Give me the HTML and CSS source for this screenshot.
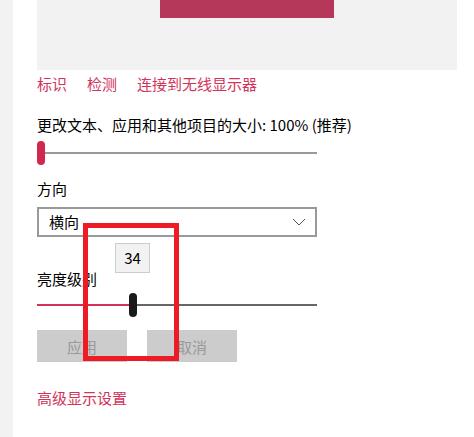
FILE: index.html
```html
<!DOCTYPE html>
<html lang="zh-CN">
<head>
    <meta charset="UTF-8">
    <meta name="viewport" content="width=device-width, initial-scale=1.0">
    <title>显示设置</title>
    <link rel="stylesheet" href="styles.css">
</head>
<body>
    <div class="side"></div>
    <div class="main">
        <div class="preview">
            <div class="monitor"></div>
        </div>
        <div class="links">
            <a href="#">标识</a>
            <a href="#">检测</a>
            <a href="#">连接到无线显示器</a>
        </div>
        <div class="label scale-label">更改文本、应用和其他项目的大小: 100% (推荐)</div>
        <div class="slider">
            <div class="thumb accent"></div>
            <div class="rest light"></div>
        </div>
        <div class="label orient-label">方向</div>
        <div class="select">
            <span>横向</span>
            <svg width="14" height="8" viewBox="0 0 14 8"><polyline points="1,1 7,7 13,1" fill="none" stroke="#555" stroke-width="1"/></svg>
        </div>
        <div class="label bright-label">亮度级别</div>
        <div class="slider bright">
            <div class="fill" style="width: 92px"></div>
            <div class="thumb dark">
                <div class="tip">34</div>
            </div>
            <div class="rest"></div>
        </div>
        <div class="buttons">
            <button disabled>应用</button>
            <button disabled>取消</button>
        </div>
        <a href="#" class="advanced">高级显示设置</a>
    </div>
    <div class="mark"></div>
</body>
</html>
```

FILE: styles.css
```css
body {
    margin: 0;
    display: flex;
    min-height: 437px;
    font-family: "Noto Sans CJK SC", "Noto Sans", sans-serif;
    font-size: 15px;
    line-height: 20px;
    color: #000;
    background: #fff;
    position: relative;
}
.side {
    width: 13px;
    background-color: #f2f2f2;
    flex-shrink: 0;
}
.main {
    padding-left: 24px;
    display: flex;
    flex-direction: column;
    align-items: flex-start;
}
.preview {
    width: 420px;
    height: 70px;
    background-color: #f2f2f2;
    display: flex;
    justify-content: center;
}
.monitor {
    width: 174px;
    height: 18px;
    background-color: #b5375a;
}
.links {
    display: flex;
    gap: 20px;
    margin-top: 4px;
}
a {
    color: #d1345b;
    text-decoration: none;
}
.scale-label {
    margin-top: 21px;
}
.slider {
    width: 280px;
    height: 24px;
    display: flex;
    align-items: center;
    margin-top: 6px;
}
.thumb {
    width: 8px;
    height: 24px;
    border-radius: 4px;
    flex-shrink: 0;
    position: relative;
}
.thumb.accent {
    background-color: #d0284f;
}
.thumb.dark {
    background-color: #1a1a1a;
}
.fill {
    height: 2px;
    background-color: #d0325a;
}
.rest {
    flex: 1;
    height: 2px;
    background-color: #666;
}
.rest.light {
    background-color: #999;
}
.orient-label {
    margin-top: 14px;
}
.select {
    margin-top: 8px;
    width: 280px;
    height: 30px;
    box-sizing: border-box;
    border: 2px solid #999;
    display: flex;
    align-items: center;
    justify-content: space-between;
    padding: 0 9px 0 10px;
}
.bright-label {
    margin-top: 32px;
}
.slider.bright {
    margin-top: 4px;
}
.tip {
    position: absolute;
    left: -14px;
    bottom: 44px;
    width: 35px;
    height: 30px;
    box-sizing: border-box;
    border: 1px solid #ccc;
    background-color: #f2f2f2;
    display: flex;
    align-items: center;
    justify-content: center;
}
.buttons {
    display: flex;
    gap: 20px;
    margin-top: 13px;
}
button {
    width: 90px;
    height: 32px;
    border: none;
    background-color: #ccc;
    color: #999;
    font-family: inherit;
    font-size: 15px;
    padding: 0;
}
.advanced {
    margin-top: 26px;
}
.mark {
    position: absolute;
    left: 83px;
    top: 223px;
    width: 96px;
    height: 138px;
    box-sizing: border-box;
    border: 5px solid #ed1c24;
}
```
